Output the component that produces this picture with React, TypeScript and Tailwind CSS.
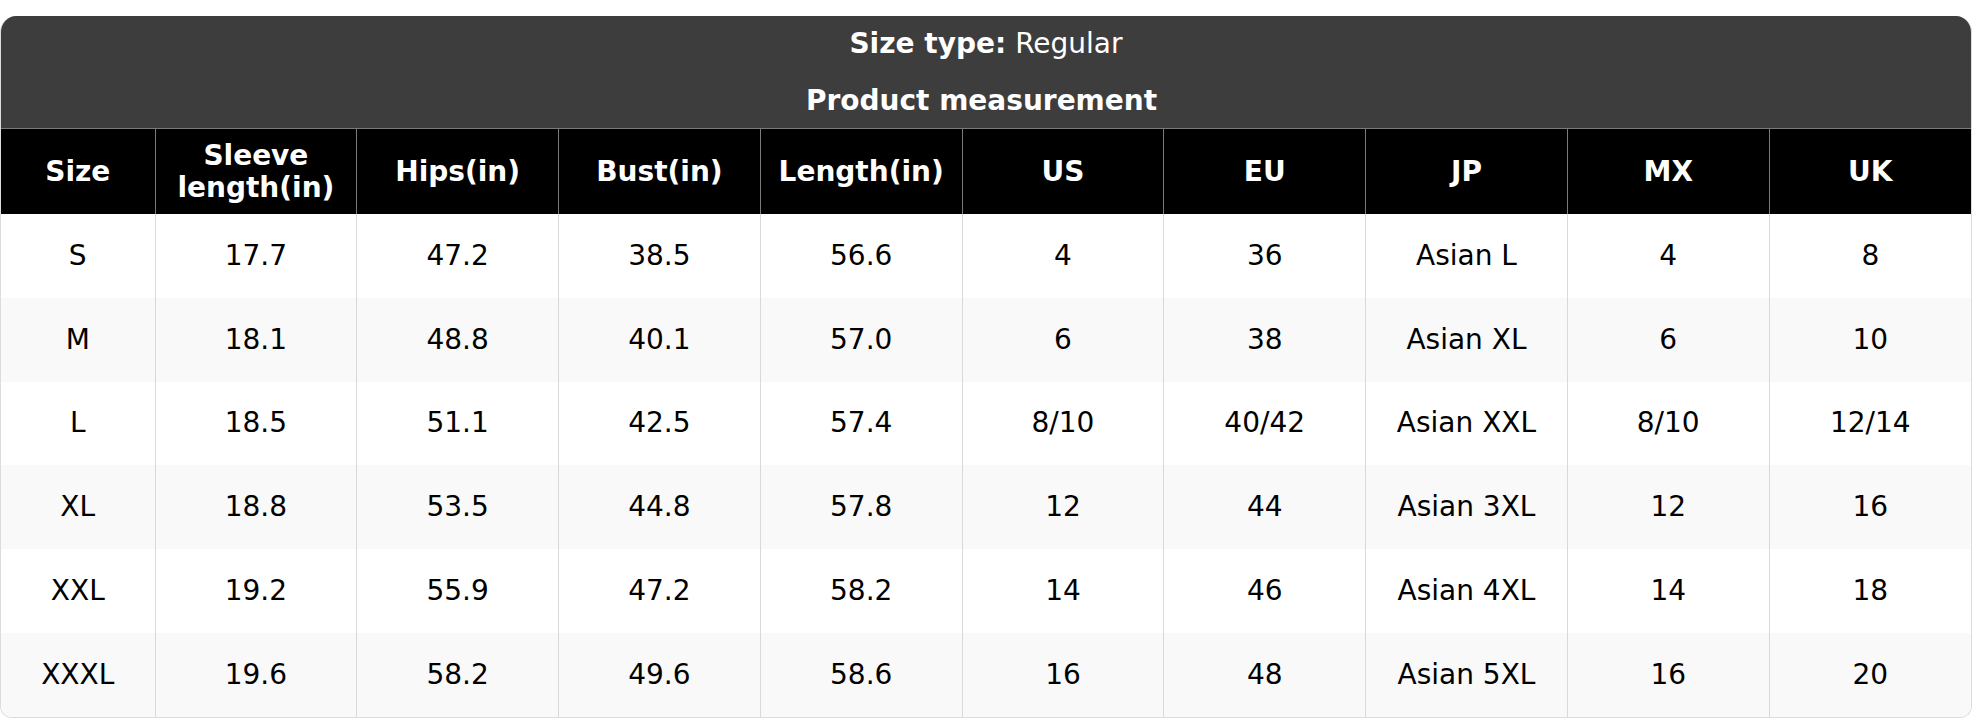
import React from "react";

const headers = ["Size", "Sleeve\nlength(in)", "Hips(in)", "Bust(in)", "Length(in)", "US", "EU", "JP", "MX", "UK"];

const rows = [
  ["S", "17.7", "47.2", "38.5", "56.6", "4", "36", "Asian L", "4", "8"],
  ["M", "18.1", "48.8", "40.1", "57.0", "6", "38", "Asian XL", "6", "10"],
  ["L", "18.5", "51.1", "42.5", "57.4", "8/10", "40/42", "Asian XXL", "8/10", "12/14"],
  ["XL", "18.8", "53.5", "44.8", "57.8", "12", "44", "Asian 3XL", "12", "16"],
  ["XXL", "19.2", "55.9", "47.2", "58.2", "14", "46", "Asian 4XL", "14", "18"],
  ["XXXL", "19.6", "58.2", "49.6", "58.6", "16", "48", "Asian 5XL", "16", "20"],
];

export default function App() {
  return (
    <div className="bg-white pt-4" style={{ fontFamily: '"DejaVu Sans", sans-serif' }}>
      <div className="overflow-hidden rounded-t-[16px] rounded-b-[12px] border border-[#dcdcdc] border-t-0">
        <div className="bg-[#3d3d3d] text-white text-center border-b border-[#7a7a7a]">
          <div className="h-[56px] flex items-center justify-center text-[28px] pb-[1px]">
            <span className="font-bold">Size type:</span>
            <span className="ml-[9px]">Regular</span>
          </div>
          <div className="h-[56px] flex items-center justify-center text-[28px] font-bold pt-[1px] pr-[9px]">Product measurement</div>
        </div>
        <table className="w-full table-fixed border-collapse">
          <colgroup>
            <col className="w-[154px]" />
            {headers.slice(1).map((_, i) => (
              <col key={i} />
            ))}
          </colgroup>
          <thead>
            <tr className="bg-black text-white">
              {headers.map((h, i) => (
                <th
                  key={i}
                  className={`h-[85px] p-0 text-[28px] font-bold leading-[32px] text-center whitespace-pre-line ${i < headers.length - 1 ? "border-r border-[#7a7a7a]" : ""}`}
                >
                  {h}
                </th>
              ))}
            </tr>
          </thead>
          <tbody>
            {rows.map((r, ri) => (
              <tr key={ri} className={ri % 2 === 0 ? "bg-white" : "bg-[#f9f9f9]"}>
                {r.map((c, ci) => (
                  <td
                    key={ci}
                    className={`h-[83.8px] p-0 text-center text-[28px] text-black ${ci < r.length - 1 ? "border-r border-[#d9d9d9]" : ""}`}
                  >
                    {c}
                  </td>
                ))}
              </tr>
            ))}
          </tbody>
        </table>
      </div>
    </div>
  );
}
